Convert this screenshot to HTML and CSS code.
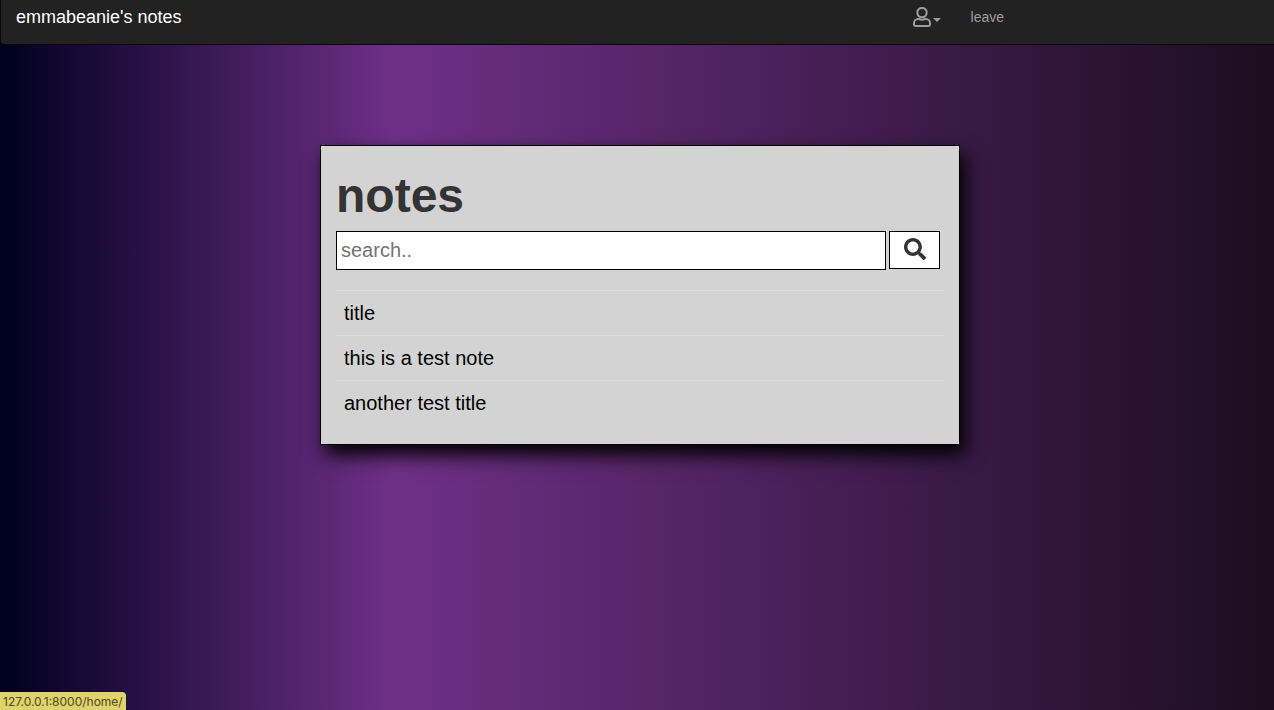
FILE: index.html
```html
<!DOCTYPE html>
<html lang="en">
<head>
<meta charset="utf-8">
<title>emmabeanie's notes</title>
<link rel="stylesheet" href="styles.css">
</head>
<body>
<nav class="navbar">
  <a class="brand" href="#">emmabeanie's notes</a>
  <div class="nav-links">
    <button class="user-menu" type="button" aria-label="account">
      <svg class="user-icon" viewBox="0 0 18 20" aria-hidden="true">
        <circle cx="9" cy="5.6" r="4.7"/>
        <path d="M5.3 12h.7c1.2.5 2 .7 3 .7s1.800-.2 3-.7h.7c2.600 0 4.300 1.900 4.300 4.300v1c0 1-.7 1.700-1.700 1.700H2.700c-1 0-1.700-.7-1.700-1.700v-1C1 13.900 2.700 12 5.300 12z"/>
      </svg>
      <span class="caret"></span>
    </button>
    <a class="leave" href="#">leave</a>
  </div>
</nav>
<main class="page">
  <section class="card">
    <h1 class="heading">notes</h1>
    <form class="search">
      <input class="search-input" type="text" placeholder="search.." aria-label="search notes">
      <button class="search-button" type="button" aria-label="search">
        <svg class="search-icon" viewBox="0 0 512 512" aria-hidden="true"><path d="M505 442.700L405.300 343c-4.500-4.500-10.600-7-17-7H372c27.600-35.300 44-79.700 44-128C416 93.100 322.900 0 208 0S0 93.100 0 208s93.100 208 208 208c48.300 0 92.700-16.400 128-44v16.300c0 6.400 2.500 12.500 7 17l99.700 99.700c9.400 9.400 24.600 9.400 33.900 0l28.300-28.300c9.400-9.400 9.400-24.600.1-34zM208 336c-70.700 0-128-57.200-128-128 0-70.700 57.200-128 128-128 70.700 0 128 57.200 128 128 0 70.700-57.200 128-128 128z"/></svg>
      </button>
    </form>
    <ul class="notes">
      <li class="note"><a class="note-link" href="#">title</a></li>
      <li class="note"><a class="note-link" href="#">this is a test note</a></li>
      <li class="note"><a class="note-link" href="#">another test title</a></li>
    </ul>
  </section>
</main>
<div class="status">127.0.0.1:8000/home/</div>
</body>
</html>
```
FILE: styles.css
```css
* {
  box-sizing: border-box;
}

body {
  margin: 0;
  min-height: 100vh;
  font-family: "Liberation Sans", Arial, sans-serif;
  color: #333;
  background: linear-gradient(90deg, #00001f 0%, #6e3087 31%, #1c0d20 100%);
}

.navbar {
  display: flex;
  justify-content: space-between;
  align-items: flex-start;
  height: 45px;
  padding: 6px 270px 0 15px;
  background: #222;
  border: 1px solid #080808;
  border-top: 0;
  border-right: 0;
  border-radius: 0 0 0 4px;
}

.brand {
  font-size: 18px;
  line-height: 22px;
  color: #fff;
  text-decoration: none;
}

.nav-links {
  display: flex;
  gap: 30px;
}

.user-menu {
  display: flex;
  align-items: center;
  gap: 2px;
  height: 22px;
  padding: 0;
  border: 0;
  background: none;
  color: #9d9d9d;
}

.user-icon {
  width: 18px;
  height: 20px;
  fill: none;
  stroke: currentColor;
  stroke-width: 2;
}

.caret {
  margin-top: 6px;
  border-top: 4px solid;
  border-left: 4px solid transparent;
  border-right: 4px solid transparent;
}

.leave {
  font-size: 14px;
  line-height: 22px;
  color: #9d9d9d;
  text-decoration: none;
}

.page {
  padding: 100px 20px 40px 26px;
}

.card {
  max-width: 640px;
  margin: 0 auto;
  padding: 22px 15px 19px;
  background: lightgray;
  border: 1px solid #000;
  box-shadow: 5px 10px 18px #000;
}

.heading {
  margin: 0 0 8px;
  font-size: 48px;
  line-height: 55px;
}

.search {
  display: flex;
  gap: 3px;
  margin: 0 4px 20px 0;
}

.search-input {
  flex: 1;
  min-width: 0;
  height: 39px;
  padding: 0 4px;
  font: 20px "Liberation Sans", Arial, sans-serif;
  background: #fff;
  border: 1px solid #000;
}

.search-input::placeholder {
  color: #757575;
}

.search-button {
  display: flex;
  align-items: center;
  justify-content: center;
  width: 51px;
  height: 38px;
  padding: 0 0 2px;
  background: #fff;
  border: 1px solid #000;
}

.search-icon {
  width: 22px;
  height: 22px;
  fill: #333;
}

.notes {
  margin: 0;
  padding: 0;
  list-style: none;
}

.note {
  padding: 8px;
  border-top: 1px solid #ddd;
}

.note-link {
  display: block;
  font-size: 20px;
  line-height: 28px;
  color: #000;
  text-decoration: none;
}

.status {
  position: fixed;
  left: 0;
  bottom: 0;
  padding: 1px 3px 0;
  font: 12px/17px Inter, sans-serif;
  color: #4e4a26;
  background: #dfd36b;
  border-radius: 0 4px 0 0;
}
```
